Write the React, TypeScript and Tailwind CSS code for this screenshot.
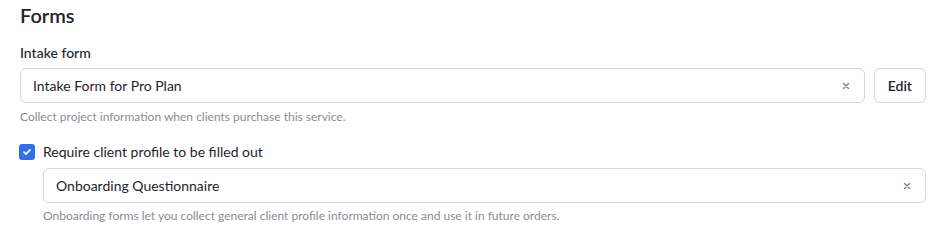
import { useState } from "react";

export default function App() {
  const [intake, setIntake] = useState("Intake Form for Pro Plan");
  const [profile, setProfile] = useState("Onboarding Questionnaire");
  const [required, setRequired] = useState(true);

  return (
    <div className="bg-white px-5 text-[#1f2329]" style={{ fontFamily: "Lato, 'Open Sans', sans-serif" }}>
      <h2 className="text-[20px] font-semibold leading-[30px]">Forms</h2>

      <div className="mt-[13px]">
        <label className="block text-[14px] font-medium leading-5">Intake form</label>
        <div className="mt-[5px] flex gap-[9px] w-[906px]">
          <SelectBox value={intake} onClear={() => setIntake("")} />
          <button className="h-[35px] px-[13px] rounded-md border border-[#d4d6da] bg-white text-[14px] font-semibold">
            Edit
          </button>
        </div>
        <p className="mt-[6px] text-[12px] leading-4 text-[#8a8d93]">
          Collect project information when clients purchase this service.
        </p>
      </div>

      <div className="mt-[17px] flex items-center gap-2 -ml-px">
        <button
          onClick={() => setRequired(!required)}
          className="w-4 h-4 rounded-[3px] bg-[#2f6fed] flex items-center justify-center"
        >
          {required && (
            <svg width="10" height="10" viewBox="0 0 10 10" fill="none">
              <path d="M2 5.2l2 2 4-4.4" stroke="white" strokeWidth="1.8" strokeLinecap="round" strokeLinejoin="round" />
            </svg>
          )}
        </button>
        <span className="text-[14px] leading-5">Require client profile to be filled out</span>
      </div>

      <div className="ml-[23px] mt-[6px] w-[883px]">
        <div className="flex">
          <SelectBox value={profile} onClear={() => setProfile("")} />
        </div>
        <p className="mt-[5px] text-[12px] leading-4 text-[#8a8d93]">
          Onboarding forms let you collect general client profile information once and use it in future orders.
        </p>
      </div>
    </div>
  );
}

function SelectBox({ value, onClear }: { value: string; onClear: () => void }) {
  return (
    <div className="flex-1 h-[35px] rounded-md border border-[#d4d6da] flex items-center pl-3 pr-[14px]">
      <span className="flex-1 text-[14px]">{value}</span>
      <button onClick={onClear} className="text-[#7b7f86]">
        <svg width="8" height="8" viewBox="0 0 8 8">
          <path d="M1.5 1.5l5 5M6.5 1.5l-5 5" stroke="currentColor" strokeWidth="1.4" strokeLinecap="round" />
        </svg>
      </button>
    </div>
  );
}
